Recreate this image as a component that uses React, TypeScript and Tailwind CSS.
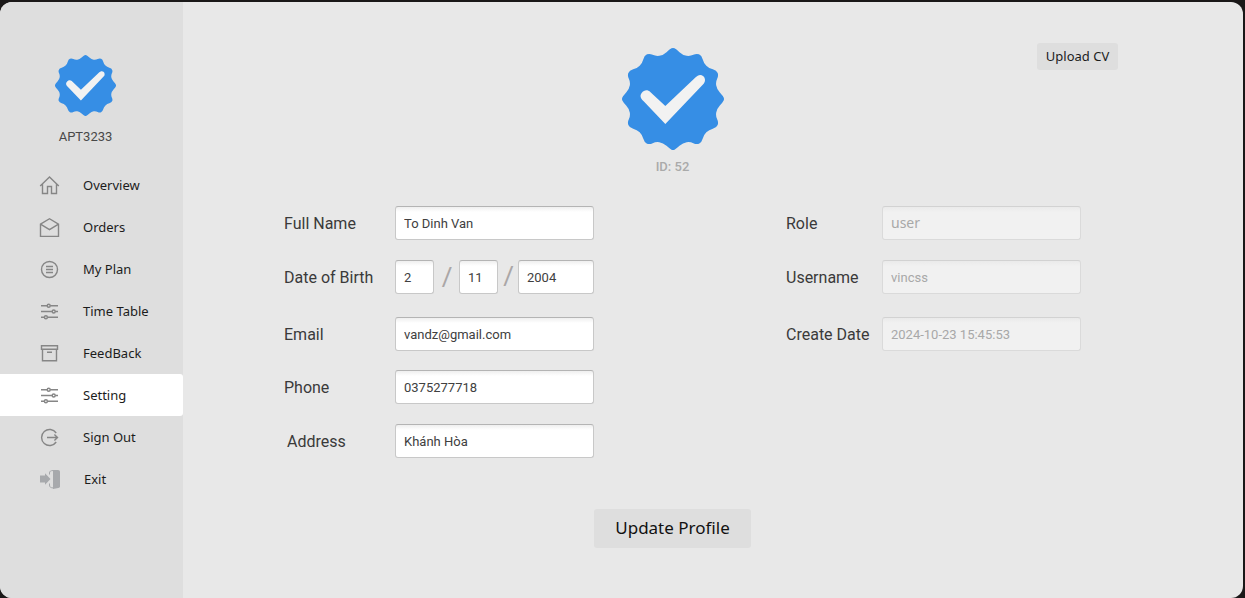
import type { ReactNode } from 'react';

const quarter = [
  [-9, -150], [0, -154], [9, -150], [30, -131], [52, -128], [70, -137], [86, -131], [92, -108],
  [108, -92], [131, -86], [137, -70], [128, -52], [131, -30],
];

const outline: number[][] = [0, 1, 2, 3].flatMap((turn) =>
  quarter.map(([x, y]) => {
    if (turn === 0) return [x, y];
    if (turn === 1) return [-y, x];
    if (turn === 2) return [-x, -y];
    return [y, -x];
  }),
);

function sealPath() {
  const mid = (a: number[], b: number[]) => `${(a[0] + b[0]) / 2} ${(a[1] + b[1]) / 2}`;
  const last = outline[outline.length - 1];
  return (
    `M${mid(last, outline[0])}` +
    outline.map((p, i) => `Q${p[0]} ${p[1]} ${mid(p, outline[(i + 1) % outline.length])}`).join('') +
    'Z'
  );
}

function Seal({ className }: { className: string }) {
  return (
    <svg viewBox="-153 -153 306 306" className={className}>
      <path d={sealPath()} fill="#368ee5" />
      <path
        d="M-94 -18C-102 -8 -94 1 -88 7L-23 75L92 -46C101 -56 94 -72 82 -72C76 -72 72 -69 68 -65L-23 21L-69 -22C-76 -29 -87 -28 -94 -18Z"
        fill="#f2f2f2"
      />
    </svg>
  );
}

function Icon({ children }: { children: ReactNode }) {
  return (
    <svg viewBox="0 0 22 22" className="h-[22px] w-[22px] shrink-0" fill="none" stroke="#868686" strokeWidth="1.4">
      {children}
    </svg>
  );
}

const home = (
  <Icon>
    <path d="M1.2 11.1L10.5 1.9L19.8 11.1M3.5 9V18.5H8.5V11.5H12.5V18.5H17.5V9" />
  </Icon>
);

const mail = (
  <Icon>
    <path d="M1.5 7.1L10.5 1.7L19.5 7.1V19.4H1.5ZM1.5 7.1L10.5 12.7L19.5 7.1" />
  </Icon>
);

const plan = (
  <Icon>
    <circle cx="10.5" cy="10.5" r="8" />
    <path d="M7 7.5H14M7 10.5H14M7 13.5H14" />
  </Icon>
);

const sliders = (
  <Icon>
    <path d="M2 4.7H8.2M11.2 4.7H19M2 10.5H13.2M16.2 10.5H19M2 16.3H5.4M8.4 16.3H19" />
    <circle cx="9.7" cy="4.7" r="1.5" />
    <circle cx="14.7" cy="10.5" r="1.5" />
    <circle cx="6.9" cy="16.3" r="1.5" />
  </Icon>
);

const box = (
  <Icon>
    <path d="M2.5 2.7H18.5V6.3H2.5ZM3.5 6.3V17.8H17.5V6.3M8 9.3H13" />
  </Icon>
);

const signOut = (
  <Icon>
    <path d="M17.2 6A8 8 0 1 0 17.2 15M8 10.5H18.4M15.4 7.6L18.5 10.5L15.4 13.4" />
  </Icon>
);

const exit = (
  <Icon>
    <path d="M1 6.5H6V4.3L11.5 10L6 15.7V13.5H1Z" fill="#a7a9ac" stroke="none" />
    <path d="M14 1H19C20.3 1 21 1.8 21 3V17.6C21 18.5 20.3 19 19.3 19L14 20Z" fill="#a7a9ac" stroke="none" />
    <path d="M10.5 5.5V4C10.5 2.2 11.5 1.6 14.5 1.5M10.5 14.5V16C10.5 18.2 11.5 18.7 14.5 19" stroke="#a7a9ac" strokeWidth="1" />
  </Icon>
);

const items = [
  { label: 'Overview', icon: home },
  { label: 'Orders', icon: mail },
  { label: 'My Plan', icon: plan },
  { label: 'Time Table', icon: sliders },
  { label: 'FeedBack', icon: box },
  { label: 'Setting', icon: sliders, active: true },
  { label: 'Sign Out', icon: signOut },
  { label: 'Exit', icon: exit, inset: true },
];

const roboto = 'font-[Roboto,sans-serif]';
const noto = "font-['Noto_Sans',sans-serif]";

function Label({ children, className = 'w-[111px]' }: { children: ReactNode; className?: string }) {
  return <span className={`h-[34px] shrink-0 text-[16px] leading-[36px] text-[#3a3a3a] ${className}`}>{children}</span>;
}

function Slash({ className }: { className: string }) {
  return <span className={`shrink-0 pl-px text-center text-[26px] text-[#aaa6a6] ${className}`}>/</span>;
}

function Field({
  value,
  width = 'w-[199px]',
  disabled,
  font = `text-[13px] ${roboto}`,
}: {
  value: string;
  width?: string;
  disabled?: boolean;
  font?: string;
}) {
  const tone = disabled
    ? 'border-[#dadada] border-t-[#d2d2d2] bg-[linear-gradient(#eaeaea,#f1f1f1_5px)] text-[#a8a8a8]'
    : 'border-[#c8c8c8] border-t-[#b4b4b4] bg-[linear-gradient(#efefef,#ffffff_5px)] text-[#404040]';
  return (
    <input
      readOnly
      disabled={disabled}
      value={value}
      className={`h-[34px] shrink-0 rounded-[3px] border px-2 outline-none ${width} ${tone} ${font}`}
    />
  );
}

export default function App() {
  return (
    <div className={`h-[598px] w-[1245px] overflow-hidden bg-[#1a1818] pt-[2px] pr-[2px] ${roboto}`}>
      <div className="flex h-[596px] w-[1243px] overflow-hidden rounded-[12px] bg-[#e8e8e8]">
        <aside className="flex w-[183px] shrink-0 flex-col bg-[#dedede]">
          <div className="flex h-[162px] flex-col items-center pr-3 pt-[53px]">
            <Seal className="h-[61px] w-[61px]" />
            <span className="mt-[11px] text-[13px] leading-5 text-[#484848]">APT3233</span>
          </div>
          <nav className={`flex flex-col text-[13px] text-[#1c1c1c] ${noto}`}>
            {items.map(({ label, icon, active, inset }) => (
              <a
                key={label}
                className={`flex h-[42px] items-center pl-[39px] pt-[2px] ${inset ? 'gap-[23px]' : 'gap-[22px]'} ${active ? 'rounded-r-[3px] bg-white' : ''}`}
              >
                {icon}
                {label}
              </a>
            ))}
          </nav>
        </aside>
        <main className="flex w-[1060px] flex-col">
          <header className="flex h-[204px] justify-between pl-[439px] pr-[125px]">
            <div className="flex flex-col items-center pt-[46px]">
              <Seal className="h-[102px] w-[102px]" />
              <span className="mt-[7px] pr-px text-[13px] leading-5 font-medium text-[#aaaaaa]">ID: 52</span>
            </div>
            <button className={`mt-[41px] h-[27px] w-[81px] rounded-[3px] bg-[#dedede] text-[13px] text-[#1c1c1c] ${noto}`}>
              Upload CV
            </button>
          </header>
          <form className="flex items-start gap-[192px] pl-[101px]">
            <div className="flex w-[310px] flex-col">
              <div className="flex">
                <Label>Full Name</Label>
                <Field value="To Dinh Van" />
              </div>
              <div className="mt-5 flex h-[34px] items-center">
                <Label>Date of Birth</Label>
                <Field value="2" width="w-[39px]" />
                <Slash className="w-[25px] leading-[34px]" />
                <Field value="11" width="w-[39px]" />
                <Slash className="w-[20px] pb-[2px] leading-[32px]" />
                <Field value="2004" width="w-[76px]" />
              </div>
              <div className="mt-[23px] flex">
                <Label>Email</Label>
                <Field value="vandz@gmail.com" />
              </div>
              <div className="mt-[19px] flex">
                <Label>Phone</Label>
                <Field value="0375277718" />
              </div>
              <div className="mt-5 flex">
                <Label className="w-[111px] pl-[3px]">Address</Label>
                <Field value="Khánh Hòa" />
              </div>
            </div>
            <div className="flex flex-col">
              <div className="flex">
                <Label className="w-[96px]">Role</Label>
                <Field value="user" disabled font={`pb-[2px] text-[14px] ${noto}`} />
              </div>
              <div className="mt-5 flex">
                <Label className="w-[96px]">Username</Label>
                <Field value="vincss" disabled />
              </div>
              <div className="mt-[23px] flex">
                <Label className="w-[96px]">Create Date</Label>
                <Field value="2024-10-23 15:45:53" disabled />
              </div>
            </div>
          </form>
          <button className={`ml-[411px] mt-[51px] h-[39px] w-[157px] rounded-[3px] bg-[#dedede] pb-[2px] text-[17px] text-[#111111] ${noto}`}>
            Update Profile
          </button>
        </main>
      </div>
    </div>
  );
}
